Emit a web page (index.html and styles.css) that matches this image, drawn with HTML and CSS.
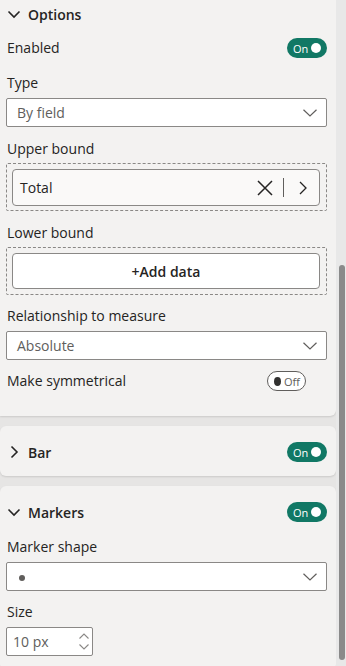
FILE: index.html
```html
<!DOCTYPE html>
<html lang="en">
<head>
    <meta charset="UTF-8">
    <meta name="viewport" content="width=device-width, initial-scale=1.0">
    <title>Format pane</title>
    <link rel="stylesheet" href="styles.css">
</head>
<body>
    <div class="pane">
        <div class="cards">
            <section class="card card-options">
                <div class="card-head">
                    <div class="head-title">
                        <svg class="chev" width="14" height="14" viewBox="0 0 14 14"><path d="M1.5 4.5 L7 10 L12.5 4.5" fill="none" stroke="#252423" stroke-width="1.6"/></svg>
                        <span>Options</span>
                    </div>
                </div>

                <div class="row row-enabled">
                    <span class="label">Enabled</span>
                    <div class="toggle on"><span>On</span><i></i></div>
                </div>

                <div class="field field-first">
                    <div class="label">Type</div>
                    <div class="select">
                        <span>By field</span>
                        <svg width="14" height="8" viewBox="0 0 14 8"><path d="M0.5 0.8 L7 7 L13.5 0.8" fill="none" stroke="#605e5c" stroke-width="1.2"/></svg>
                    </div>
                </div>

                <div class="field">
                    <div class="label">Upper bound</div>
                    <div class="well">
                        <div class="chip">
                            <span>Total</span>
                            <div class="chip-tools">
                                <svg width="16" height="16" viewBox="0 0 16 16"><path d="M1 1 L15 15 M15 1 L1 15" fill="none" stroke="#252423" stroke-width="1.5"/></svg>
                                <b class="sep"></b>
                                <svg width="8" height="14" viewBox="0 0 8 14"><path d="M1 1 L7 7 L1 13" fill="none" stroke="#252423" stroke-width="1.3"/></svg>
                            </div>
                        </div>
                    </div>
                </div>

                <div class="field">
                    <div class="label">Lower bound</div>
                    <div class="well">
                        <div class="add-btn">+Add data</div>
                    </div>
                </div>

                <div class="field field-tight">
                    <div class="label">Relationship to measure</div>
                    <div class="select">
                        <span>Absolute</span>
                        <svg width="14" height="8" viewBox="0 0 14 8"><path d="M0.5 0.8 L7 7 L13.5 0.8" fill="none" stroke="#605e5c" stroke-width="1.2"/></svg>
                    </div>
                </div>

                <div class="row row-sym">
                    <span class="label">Make symmetrical</span>
                    <div class="toggle off"><i></i><span>Off</span></div>
                </div>
            </section>

            <section class="card card-bar">
                <div class="card-head">
                    <div class="head-title">
                        <svg class="chev" width="14" height="14" viewBox="0 0 14 14"><path d="M4.5 1.5 L10 7 L4.5 12.5" fill="none" stroke="#252423" stroke-width="1.6"/></svg>
                        <span>Bar</span>
                    </div>
                    <div class="toggle on"><span>On</span><i></i></div>
                </div>
            </section>

            <section class="card card-markers">
                <div class="card-head">
                    <div class="head-title">
                        <svg class="chev" width="14" height="14" viewBox="0 0 14 14"><path d="M1.5 4.5 L7 10 L12.5 4.5" fill="none" stroke="#252423" stroke-width="1.6"/></svg>
                        <span>Markers</span>
                    </div>
                    <div class="toggle on"><span>On</span><i></i></div>
                </div>

                <div class="field field-first">
                    <div class="label">Marker shape</div>
                    <div class="select">
                        <span class="dot"></span>
                        <svg width="14" height="8" viewBox="0 0 14 8"><path d="M0.5 0.8 L7 7 L13.5 0.8" fill="none" stroke="#605e5c" stroke-width="1.2"/></svg>
                    </div>
                </div>

                <div class="field field-tight">
                    <div class="label">Size</div>
                    <div class="spin">
                        <span>10 px</span>
                        <div class="spin-arrows">
                            <svg width="10" height="6" viewBox="0 0 10 6"><path d="M0.5 5.5 L5 1 L9.5 5.5" fill="none" stroke="#8a8886" stroke-width="1.1"/></svg>
                            <svg width="10" height="6" viewBox="0 0 10 6"><path d="M0.5 0.5 L5 5 L9.5 0.5" fill="none" stroke="#8a8886" stroke-width="1.1"/></svg>
                        </div>
                    </div>
                </div>
            </section>
        </div>

        <div class="scrollbar"><div class="thumb"></div></div>
    </div>
</body>
</html>
```

FILE: styles.css
```css
body {
    margin: 0;
    padding: 0;
    font-family: "Open Sans", "Noto Sans", Arial, sans-serif;
    font-size: 14px;
    color: #252423;
    background: #e6e5e4;
}

.pane {
    display: flex;
    width: 346px;
    height: 666px;
    overflow: hidden;
}

.cards {
    width: 336px;
    display: flex;
    flex-direction: column;
    gap: 10px;
}

.card {
    background: #f3f2f1;
    border-radius: 6px;
    padding: 16px 9px 14px 6px;
    box-shadow: 0 1px 2px rgba(0, 0, 0, 0.12);
}

.card-options {
    padding-top: 4px;
    padding-bottom: 25px;
    border-radius: 0 0 6px 0;
}

.card-markers {
    flex: 1;
}

.card-head {
    height: 20px;
    display: flex;
    justify-content: space-between;
    align-items: center;
}

.head-title {
    display: flex;
    align-items: center;
    gap: 7px;
    font-size: 14px;
    font-weight: 600;
}

.chev {
    margin-left: 1px;
}

.label {
    font-size: 14px;
    line-height: 20px;
    height: 20px;
    padding-left: 1px;
}

.row {
    height: 20px;
    display: flex;
    justify-content: space-between;
    align-items: center;
}

.row-enabled {
    margin-top: 14px;
}

.row-sym {
    margin-top: 11px;
}

.field {
    margin-top: 12px;
}

.field-first {
    margin-top: 15px;
}

.field-tight {
    margin-top: 11px;
}

.select {
    margin-top: 5px;
    height: 29px;
    box-sizing: border-box;
    background: #ffffff;
    border: 1px solid #8a8886;
    border-radius: 2px;
    display: flex;
    justify-content: space-between;
    align-items: center;
    padding: 0 9px 0 10px;
    color: #605e5c;
    font-size: 14px;
}

.dot {
    width: 6px;
    height: 6px;
    margin-left: 2px;
    margin-top: 3px;
    border-radius: 50%;
    background: #605e5c;
}

.well {
    margin-top: 4px;
    height: 48px;
    box-sizing: border-box;
    border: 1px dashed #8a8886;
    border-radius: 2px;
    padding: 5px 6px 0 5px;
}

.chip {
    height: 37px;
    box-sizing: border-box;
    border: 1px solid #8a8886;
    border-radius: 4px;
    background: #faf9f8;
    display: flex;
    justify-content: space-between;
    align-items: center;
    padding: 0 12px 0 7px;
    font-size: 14px;
}

.chip-tools {
    display: flex;
    align-items: center;
    gap: 10px;
}

.sep {
    width: 1px;
    height: 19px;
    background: #605e5c;
    margin: 0 5px 0 0;
}

.add-btn {
    height: 36px;
    box-sizing: border-box;
    border: 1px solid #8a8886;
    border-radius: 4px;
    background: #ffffff;
    display: flex;
    justify-content: center;
    align-items: center;
    font-size: 14px;
    font-weight: 600;
}

.toggle {
    width: 40px;
    height: 20px;
    box-sizing: border-box;
    border-radius: 10px;
    display: flex;
    align-items: center;
    font-size: 11px;
}

.toggle.on {
    background: #117865;
    color: #ffffff;
    padding: 0 6px 0 6px;
    justify-content: space-between;
}

.toggle.on i {
    width: 10px;
    height: 10px;
    border-radius: 50%;
    background: #ffffff;
}

.toggle.off {
    width: 39px;
    border: 1px solid #605e5c;
    background: #ffffff;
    color: #605e5c;
    padding: 0 5px 0 6px;
    gap: 3px;
    margin-right: 21px;
}

.toggle.off i {
    width: 9px;
    height: 9px;
    border-radius: 50%;
    background: #323130;
}

.spin {
    margin-top: 5px;
    width: 87px;
    height: 29px;
    box-sizing: border-box;
    background: #ffffff;
    border: 1px solid #8a8886;
    border-radius: 2px;
    display: flex;
    justify-content: space-between;
    align-items: center;
    padding: 0 3px 0 6px;
    color: #605e5c;
    font-size: 14px;
}

.spin-arrows {
    display: flex;
    flex-direction: column;
    gap: 5px;
}

.scrollbar {
    width: 10px;
    background: #e8e8e8;
}

.thumb {
    margin: 265px 0 0 3px;
    width: 6px;
    height: 395px;
    border-radius: 3px;
    background: #8a8a8a;
}
```
